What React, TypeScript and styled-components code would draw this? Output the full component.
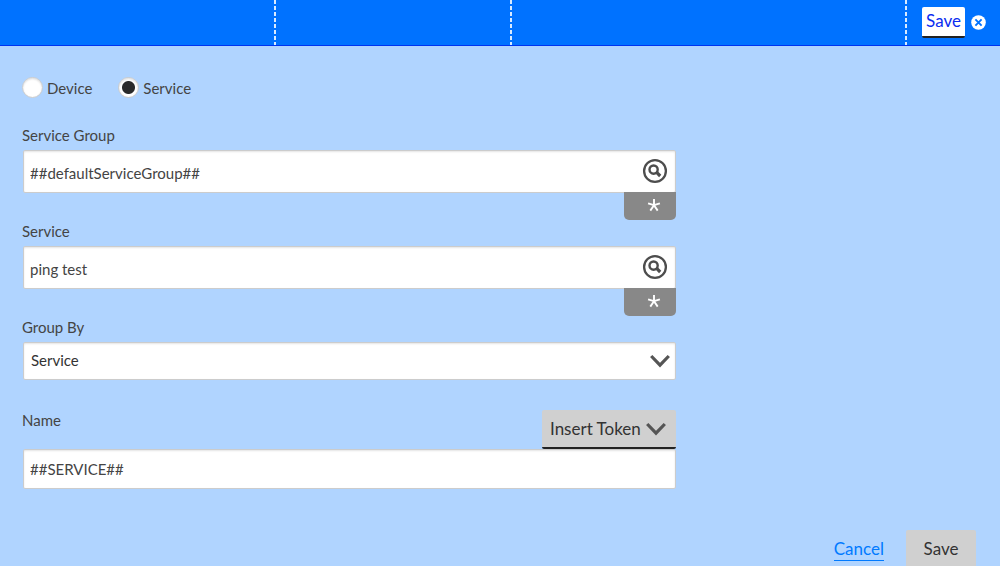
import React, { useState } from "react";
import styled, { createGlobalStyle, css } from "styled-components";

const GlobalStyle = createGlobalStyle`
  *, *::before, *::after { box-sizing: border-box; }
  body {
    margin: 0;
    background: #b0d4ff;
    color: #444;
    font-family: Lato, "Open Sans", sans-serif;
    font-size: 15px;
    line-height: 20px;
  }
  button, input, select { font: inherit; color: inherit; margin: 0; }
`;

const Page = styled.div`
  display: flex;
  flex-direction: column;
  height: 100vh;
  overflow: hidden;
`;

const Header = styled.header`
  display: grid;
  grid-template-columns: 276px 236px 1fr 93px;
  flex: none;
  height: 46px;
  background: #0072ff;
  border-bottom: 1px solid #0034f0;
`;

const HeaderCell = styled.div`
  background: repeating-linear-gradient(#d8eaff 0 4px, transparent 4px 6px) right / 2px 100% no-repeat;
`;

const HeaderActions = styled.div`
  display: flex;
  align-items: center;
  gap: 6px;
  padding-left: 15px;
`;

const HeaderSave = styled.button`
  width: 43px;
  height: 31px;
  padding: 0 0 2px;
  border: 0;
  border-bottom: 2px solid #222;
  border-radius: 2px;
  background: #fff;
  color: #0a2cf0;
  font-size: 17px;
`;

const CloseButton = styled.button`
  display: flex;
  padding: 0;
  border: 0;
  background: none;
`;

const Main = styled.form`
  padding: 31px 24px 0 22px;
`;

const Fields = styled.div`
  max-width: 654px;
`;

const RadioRow = styled.div`
  display: flex;
  gap: 26px;
  margin-bottom: 27px;
`;

const RadioLabel = styled.label`
  display: flex;
  align-items: center;
  gap: 4px;
  line-height: 18px;
`;

const Radio = styled.input`
  appearance: none;
  width: 21px;
  height: 21px;
  border: 1px solid #ccc;
  border-radius: 50%;
  background: #fff;
  box-shadow: inset 0 1px 2px #ddd;
  &:checked {
    background: radial-gradient(circle, #2a2a2a 0 6px, #fff 7px);
  }
`;

const Field = styled.div`
  display: flex;
  flex-direction: column;
`;

const Label = styled.label`
  margin-bottom: 5px;
`;

const boxed = css`
  width: calc(100% - 1px);
  margin-left: 1px;
  border: 1px solid #ccc;
  border-radius: 2px;
  background: #fff;
  box-shadow: inset 0 1px 2px #e4e4e4;
  outline: 0;
`;

const SearchBox = styled.div`
  ${boxed}
  display: flex;
  align-items: center;
  height: 43px;
  padding: 0 7px 2px 0;
`;

const BareInput = styled.input`
  flex: 1;
  min-width: 0;
  padding: 5px 6px 0;
  border: 0;
  background: none;
  outline: 0;
`;

const IconButton = styled.button`
  display: flex;
  padding: 0;
  border: 0;
  background: none;
`;

const RequiredTag = styled.div`
  align-self: flex-end;
  width: 52px;
  height: 28px;
  border-radius: 0 0 5px 5px;
  background: #888;
  display: flex;
  justify-content: center;
  align-items: center;
  padding: 0 0 2px 7px;
  margin: -1px 0 1px;
`;

const SelectWrap = styled.div`
  display: grid;
  align-items: center;
  & > * { grid-area: 1 / 1; }
  & > svg {
    justify-self: end;
    margin-right: 6px;
    pointer-events: none;
  }
`;

const Select = styled.select`
  && { ${boxed} }
  appearance: none;
  height: 38px;
  padding: 0 7px 2px;
  color: #333;
`;

const NameHead = styled.div`
  display: flex;
  justify-content: space-between;
  align-items: flex-start;
  margin-top: 30px;
`;

const TokenButton = styled.button`
  display: flex;
  align-items: center;
  justify-content: space-between;
  width: 134px;
  height: 39px;
  padding: 1px 10px 0 8px;
  border: 0;
  border-bottom: 2px solid #222;
  border-radius: 2px;
  background: #d0d0d0;
  color: #333;
  font-size: 17px;
`;

const TextInput = styled.input`
  && { ${boxed} }
  display: block;
  height: 40px;
  padding: 0 6px;
`;

const Footer = styled.div`
  display: flex;
  justify-content: flex-end;
  align-items: flex-start;
  gap: 22px;
  margin-top: 41px;
`;

const CancelLink = styled.a`
  margin-top: 8px;
  border-bottom: 1px solid #007aff;
  color: #007aff;
  font-size: 17px;
  line-height: 22px;
  text-decoration: none;
`;

const SaveButton = styled.button`
  width: 70px;
  height: 41px;
  padding: 0 0 2px;
  border: 0;
  border-bottom: 2px solid #222;
  border-radius: 2px;
  background: #d0d0d0;
  color: #333;
  font-size: 17px;
`;

const Chevron = () => (
  <svg width="20" height="14" viewBox="0 0 20 14" fill="none" stroke="#555" strokeWidth="3.2" aria-hidden="true">
    <path d="M1.2 2L10 11.2L18.8 2" />
  </svg>
);

const SearchIcon = () => (
  <svg width="26" height="26" viewBox="0 0 26 26" fill="none" stroke="#4d4d4d" aria-hidden="true">
    <circle cx="13" cy="13" r="10.9" strokeWidth="2.3" />
    <circle cx="11.6" cy="11.6" r="4.1" strokeWidth="2.4" />
    <path d="M14.4 14.2L18.2 18" strokeWidth="3.2" />
  </svg>
);

const Asterisk = () => (
  <svg width="14" height="14" viewBox="0 0 14 14" stroke="#fff" strokeWidth="1.9" role="img" aria-label="Required">
    <path d="M7 7.2V1M7 7.2L1.1 5.3M7 7.2L12.9 5.3M7 7.2L3.3 12.6M7 7.2L10.7 12.6" />
  </svg>
);

const CloseIcon = () => (
  <svg width="15" height="15" viewBox="0 0 15 15" aria-hidden="true">
    <circle cx="7.5" cy="7.5" r="7.3" fill="#fff" />
    <path d="M4.4 4.4L10.6 10.6M10.6 4.4L4.4 10.6" stroke="#0072ff" strokeWidth="1.9" />
  </svg>
);

function SearchField({ id, label, initial }: { id: string; label: string; initial: string }) {
  return (
    <Field>
      <Label htmlFor={id}>{label}</Label>
      <SearchBox>
        <BareInput id={id} defaultValue={initial} />
        <IconButton type="button" aria-label={`Search ${label}`}>
          <SearchIcon />
        </IconButton>
      </SearchBox>
      <RequiredTag>
        <Asterisk />
      </RequiredTag>
    </Field>
  );
}

export default function App() {
  const [kind, setKind] = useState("Service");
  return (
    <Page>
      <GlobalStyle />
      <Header>
        <HeaderCell />
        <HeaderCell />
        <HeaderCell />
        <HeaderActions>
          <HeaderSave type="button">Save</HeaderSave>
          <CloseButton type="button" aria-label="Close">
            <CloseIcon />
          </CloseButton>
        </HeaderActions>
      </Header>
      <Main onSubmit={(e) => e.preventDefault()}>
        <Fields>
          <RadioRow>
            {["Device", "Service"].map((k) => (
              <RadioLabel key={k}>
                <Radio type="radio" name="kind" checked={kind === k} onChange={() => setKind(k)} />
                {k}
              </RadioLabel>
            ))}
          </RadioRow>
          <SearchField id="group" label="Service Group" initial="##defaultServiceGroup##" />
          <SearchField id="service" label="Service" initial="ping test" />
          <Field>
            <Label htmlFor="groupBy">Group By</Label>
            <SelectWrap>
              <Select id="groupBy" defaultValue="Service">
                <option>Service</option>
                <option>Device</option>
              </Select>
              <Chevron />
            </SelectWrap>
          </Field>
          <NameHead>
            <Label htmlFor="name">Name</Label>
            <TokenButton type="button">
              Insert Token
              <Chevron />
            </TokenButton>
          </NameHead>
          <TextInput id="name" defaultValue="##SERVICE##" />
        </Fields>
        <Footer>
          <CancelLink href="#">Cancel</CancelLink>
          <SaveButton type="submit">Save</SaveButton>
        </Footer>
      </Main>
    </Page>
  );
}
